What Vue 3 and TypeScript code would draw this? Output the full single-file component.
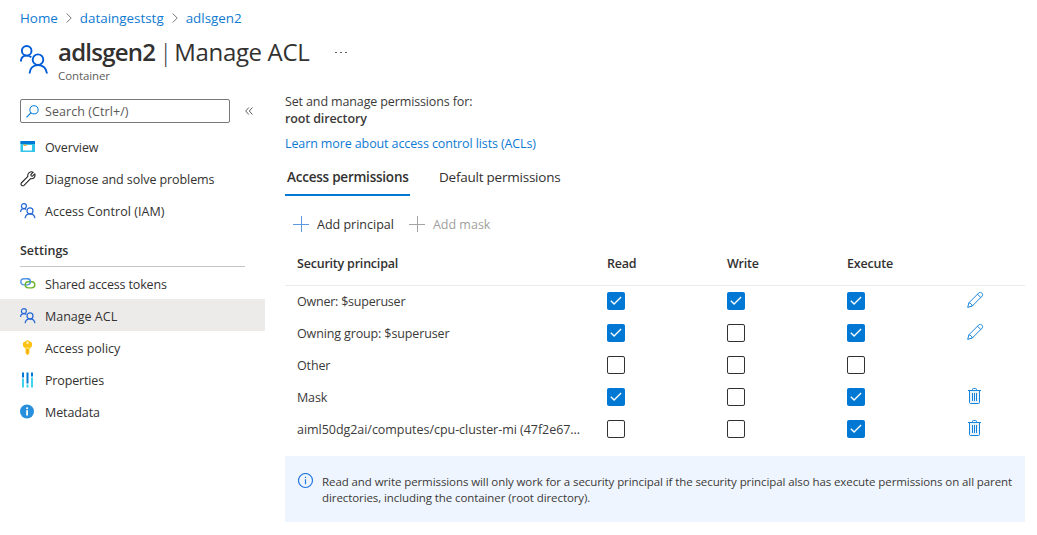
<script setup lang="ts">
interface NavItem { icon: string; label: string; cls: string; active?: boolean }
interface Row { name: string; cls: string; perms: boolean[]; action: '' | 'edit' | 'delete' }

const general: NavItem[] = [
  { icon: 'overview', label: 'Overview', cls: 'n-overview' },
  { icon: 'wrench', label: 'Diagnose and solve problems', cls: 'n-diagnose' },
  { icon: 'people', label: 'Access Control (IAM)', cls: 'n-iam' },
]
const settings: NavItem[] = [
  { icon: 'link', label: 'Shared access tokens', cls: 'n-tokens' },
  { icon: 'people', label: 'Manage ACL', cls: 'n-acl', active: true },
  { icon: 'key', label: 'Access policy', cls: 'n-policy' },
  { icon: 'bars', label: 'Properties', cls: 'n-props' },
  { icon: 'info', label: 'Metadata', cls: 'n-meta' },
]
const groups = [general, settings]
const rows: Row[] = [
  { name: 'Owner: $superuser', cls: 'r-owner', perms: [true, true, true], action: 'edit' },
  { name: 'Owning group: $superuser', cls: 'r-group', perms: [true, false, true], action: 'edit' },
  { name: 'Other', cls: 'r-other', perms: [false, false, false], action: '' },
  { name: 'Mask', cls: 'r-mask', perms: [true, false, true], action: 'delete' },
  { name: 'aiml50dg2ai/computes/cpu-cluster-mi (47f2e67...', cls: 'r-aiml', perms: [false, false, true], action: 'delete' },
]
</script>

<template>
  <div class="page">
    <nav class="crumbs">
      <a>Home</a>
      <svg width="6" height="10" viewBox="0 0 6 10"><path d="M.7.5 5.2 5 .7 9.5" /></svg>
      <a>dataingeststg</a>
      <svg width="6" height="10" viewBox="0 0 6 10"><path d="M.7.5 5.2 5 .7 9.5" /></svg>
      <a>adlsgen2</a>
    </nav>

    <header class="head">
      <svg class="logo" width="28" height="29" viewBox="0 0 28 29" fill="none" stroke="#015cda" stroke-width="1.9">
        <circle cx="6.7" cy="5.8" r="4.8" /><path d="M.9 16.5C1 12.4 3.4 10.6 6.7 10.6c1.9 0 3.4.6 4.6 1.7" />
        <circle cx="18" cy="14.7" r="5.3" /><path d="M9.5 28.5C9.9 23.3 13.4 20 18.1 20s8.4 3.300 8.900 8.500" />
      </svg>
      <div class="titles">
        <h1><b>adlsgen2</b><span class="bar">|</span><span class="sub">Manage ACL</span></h1>
        <p>Container</p>
      </div>
      <div class="dots"><i></i><i></i><i></i></div>
    </header>

    <div class="body">
      <aside>
        <div class="search-row">
          <div class="search">
            <svg width="13" height="13" viewBox="0 0 13 13" fill="none" stroke="#0078d4"><circle cx="8" cy="4.800" r="4.100" /><path d="M5.100 7.700.5 12.300" stroke-width="1.200" /></svg>
            <span>Search (Ctrl+/)</span>
          </div>
          <svg width="8" height="8" viewBox="0 0 8 8" fill="none" stroke="#605e5c"><path d="M3.800.5.700 4l3.100 3.500M7.400.5 4.300 4l3.100 3.500" /></svg>
        </div>

        <template v-for="(group, g) in groups" :key="g">
          <h2 v-if="g === 1"><span>Settings</span></h2>
          <div v-for="item in group" :key="item.label" class="nav" :class="{ active: item.active }">
            <svg class="ico" width="16" height="16" viewBox="0 0 16 16" fill="none">
              <g v-if="item.icon === 'overview'">
                <path fill="#32c5ea" d="M.5 2h14.500v11H.5z" /><path fill="#0078d4" d="M.5 2h14.500v3H.5z" />
                <path fill="#fff" d="M3 6h9v5.500H3z" /><path fill="#f2a73b" d="M3.500 5.500h3v1.500h-3z" />
              </g>
              <path v-else-if="item.icon === 'wrench'" stroke="#252423" stroke-width="1.100" stroke-linejoin="round" d="M13.200 1.200 10.900 3.500 11.100 5 12.500 5.200 14.800 2.900C15.700 5.800 13.600 8.300 10.600 7.600L4 14.300C2.600 15.600.2 13.800 1.300 12L7.900 5.300C7.100 2.400 10.300-.2 13.200 1.200Z" />
              <g v-else-if="item.icon === 'people'" stroke="#2467d4" stroke-width="1.200">
                <circle cx="3.900" cy="3.100" r="2.500" /><path d="M.6 9c0-2.300 1.500-3.400 3.300-3.400 1 0 1.800.3 2.400.9" />
                <circle cx="10" cy="7.900" r="3" /><path d="M5.100 15.300c.3-2.900 2.200-4.400 4.900-4.400s4.600 1.500 4.900 4.400" />
              </g>
              <g v-else-if="item.icon === 'link'" stroke-width="1.400">
                <rect x=".8" y="2.700" width="9.600" height="6.200" rx="3.100" stroke="#5096e8" />
                <rect x="5.200" y="5.700" width="9.600" height="6.200" rx="3.100" stroke="#6bb42d" />
                <path stroke="#5096e8" d="M7.600 2.700c2 .2 3 1.800 2.700 3.600" />
              </g>
              <g v-else-if="item.icon === 'key'">
                <path fill="#fcc112" d="m7.500 0 4.500 2.800v3.400L9.400 8.700v4.500l-1.900 2-1.900-2V8.700L3 6.200V2.800z" />
                <path fill="#ffda4a" d="M5.600 7h3.800v2H5.600z" /><circle cx="7.500" cy="2.700" r="1.200" fill="#fff1be" /><path fill="#e99a00" d="M6.900 9.500h.8v3.600h-.8z" />
              </g>
              <g v-else-if="item.icon === 'bars'">
                <path fill="#0078d4" d="M2 .5h2v5H2zm4.500 0h2v11h-2zm4.500 0h2v4h-2z" />
                <path fill="#41d2ed" d="M2 6.500h2v9H2zm4.500 6h2v3h-2zM11 5.500h2v10h-2z" />
              </g>
              <g v-else>
                <circle cx="7" cy="7.500" r="7" fill="#298fdd" />
                <path fill="#fff" d="M6.200 6.200h1.800v5.300H6.200z" /><circle cx="7.100" cy="4.200" r="1.050" fill="#fff" />
              </g>
            </svg>
            <span :class="item.cls">{{ item.label }}</span>
          </div>
        </template>
      </aside>

      <main>
        <p class="intro"><span class="i-set">Set and manage permissions for:</span><b>root directory</b></p>
        <a class="learn">Learn more about access control lists (ACLs)</a>

        <div class="tabs">
          <div class="tab on"><span>Access permissions</span></div>
          <div class="tab"><span>Default permissions</span></div>
        </div>

        <div class="cmds">
          <svg width="16" height="16" viewBox="0 0 16 16" stroke="#5b98df" shape-rendering="crispEdges"><path d="M8.500 0v16M0 8.500h16" /></svg>
          <span class="c-principal">Add principal</span>
          <svg width="16" height="16" viewBox="0 0 16 16" stroke="#a3a3a3" shape-rendering="crispEdges"><path d="M8.500 0v16M0 8.500h16" /></svg>
          <span class="c-mask">Add mask</span>
        </div>

        <div class="grid thead">
          <span class="t-sec">Security principal</span><span>Read</span><span>Write</span><span>Execute</span>
        </div>
        <div v-for="row in rows" :key="row.name" class="grid row">
          <span :class="row.cls">{{ row.name }}</span>
          <div v-for="(on, i) in row.perms" :key="i" class="box" :class="{ on }">
            <svg v-if="on" width="18" height="18" viewBox="0 0 18 18" fill="none" stroke="#fff" stroke-width="1.300"><path d="m3.800 8.700 3.300 3.300 7-7" /></svg>
          </div>
          <svg v-if="row.action === 'edit'" width="18" height="18" viewBox="1 1 18 18" fill="none" stroke="#1683d8">
            <path d="m1.700 16.300 1.200-4.500L12.800 1.900c1.900-1.700 4.900 1 3.300 3.300L6.200 15.100zM11.500 3.200l3.300 3.300M2.900 11.800c1.700.2 3 1.500 3.300 3.300" />
          </svg>
          <svg v-else-if="row.action === 'delete'" width="18" height="18" viewBox="1 1 18 18" fill="none" stroke="#1683d8">
            <path fill="#e8f3fc" d="M3.500 3.500v12q0 1 1 1h8q1 0 1-1v-12" /><path d="M2 3.500h13M6.500 3.500v-1q0-1 1-1h2q1 0 1 1v1M6.500 6v8M8.500 6v8M10.500 6v8" />
          </svg>
        </div>

        <div class="note">
          <svg width="16" height="16" viewBox="0 0 16 16" fill="none" stroke="#2477e3"><circle cx="7.500" cy="7.500" r="7" stroke-width="1.200" /><path d="M7.500 6.300V11.200M7.500 3.700v1.300" stroke-width="1.200" /></svg>
          <p><span>Read and write permissions will only work for a security principal if the security principal also has execute permissions on all parent</span><span>directories, including the container (root directory).</span></p>
        </div>
      </main>
    </div>
  </div>
</template>

<style>
body { background: #fff; }
</style>

<style scoped>
.page { width: 1037px; height: 535px; overflow: hidden; background: #fff; color: #323130; font: 12.500px/16px "Open Sans", "Noto Sans", sans-serif; }
.page span, .page a, .page b { white-space: nowrap; }
h1, h2, p { margin: 0; font-weight: 400; }
svg { display: block; flex: none; }
a { color: #0f7ad2; }
b { font-weight: 600; }

.crumbs { display: flex; align-items: center; height: 36px; padding-left: 20px; gap: 8px; font-size: 13.400px; }
.crumbs svg { fill: none; stroke: #797775; }

.head { display: flex; height: 63px; padding-left: 20px; }
.logo { margin-top: 9px; }
.titles { margin-left: 10px; }
h1 { display: flex; height: 31px; line-height: 31px; font-size: 24px; color: #323130; }
h1 b { letter-spacing: -.75px; }
h1 .bar { margin: 0 2px 0 4px; font-weight: 300; }
h1 .sub { letter-spacing: -.35px; }
.titles p { margin-top: 1px; font-size: 11.500px; line-height: 15px; letter-spacing: -.1px; color: #605e5c; }
.dots { display: flex; gap: 3px; margin: 16px 0 0 26px; }
.dots i { width: 2px; height: 1px; background: #605e5c; }

.body { display: flex; }
aside { width: 265px; flex: none; }
.search-row { display: flex; align-items: center; gap: 15px; padding-left: 20px; margin-bottom: 7px; }
.search { box-sizing: border-box; width: 210px; height: 24px; border: 1px solid #7a7876; border-radius: 2px; display: flex; align-items: center; padding-left: 5px; gap: 6px; color: #5a5856; }
.search span { margin-top: 2px; letter-spacing: .07px; }
.nav { display: flex; align-items: center; box-sizing: border-box; height: 32px; padding: 2px 0 0 20px; gap: 9px; }
.nav span { margin-top: 2px; }
.nav.active { background: #edebe9; }
.n-overview { letter-spacing: -.1px; }
.n-diagnose { letter-spacing: -.08px; }
.n-iam { letter-spacing: .04px; }
.n-tokens { letter-spacing: -.15px; }
.n-policy { letter-spacing: -.05px; }
.n-props { letter-spacing: -.15px; }
.n-meta { letter-spacing: -.1px; }
h2 { box-sizing: border-box; height: 32px; margin: 9px 20px 0; border-bottom: 1px solid #c8c6c4; font-size: 12.500px; line-height: 32px; font-weight: 600; }

main { width: 740px; margin-left: 20px; }
.intro { display: flex; flex-direction: column; line-height: 17px; margin-top: -6px; color: #3b3a39; letter-spacing: -.13px; }
.learn { display: block; margin-top: 8px; line-height: 17px; letter-spacing: -.11px; }
.tabs { display: flex; height: 44px; font-size: 13.500px; letter-spacing: -.23px; }
.tab { height: 44px; line-height: 51px; box-sizing: border-box; padding: 0 2px; margin-right: 27px; }
.tab.on { border-bottom: 2px solid #0078d4; font-weight: 600; width: 125px; }
.cmds { display: flex; align-items: center; height: 56px; padding-left: 8px; gap: 8px; }
.cmds span { margin-top: 2px; }
.c-mask { color: #a19f9d; }
.c-principal { margin-right: 7px; }
.grid { display: grid; grid-template-columns: 310px 120px 120px 120px 1fr; align-items: center; height: 32px; padding-left: 12px; box-sizing: border-box; }
.thead { height: 34px; padding-bottom: 9px; border-bottom: 1px solid #edebe9; font-weight: 600; margin-bottom: -1px; letter-spacing: -.21px; }
.row span { margin-top: 2px; color: #3b3a39; }
.r-owner { letter-spacing: -.22px; }
.r-group { letter-spacing: -.13px; }
.r-other, .r-mask { letter-spacing: -.15px; }
.r-aiml { letter-spacing: -.04px; }
.box { width: 18px; height: 18px; box-sizing: border-box; border: 1px solid #323130; border-radius: 2px; }
.box.on { border: 0; background: #0078d4; }
.note { display: flex; height: 66px; box-sizing: border-box; margin-top: 11px; padding: 17px 0 0 13px; gap: 8px; background: #eff5fe; font-size: 11.500px; line-height: 16px; letter-spacing: -.087px; color: #3b3a39; }
.note p { display: flex; flex-direction: column; margin-top: 1px; }
</style>
